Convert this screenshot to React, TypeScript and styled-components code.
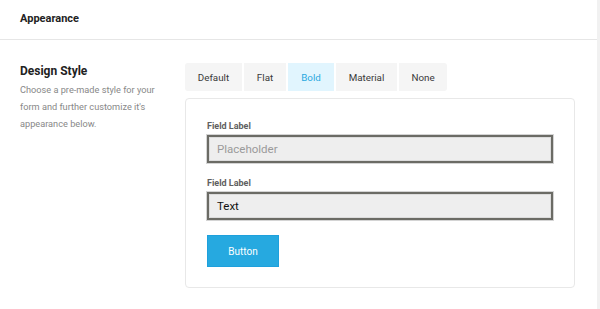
import { createGlobalStyle } from "styled-components";
import styled from "styled-components";

const GlobalStyle = createGlobalStyle`
  html, body {
    margin: 0;
    padding: 0;
    background: #ffffff;
    font-family: Roboto, "Noto Sans", "Liberation Sans", sans-serif;
  }
`;

const Page = styled.div`
  width: 597px;
  height: 309px;
  border-right: 3px solid #f1f1f1;
  background: #fff;
  overflow: hidden;
`;

const Header = styled.div`
  height: 40px;
  border-bottom: 1px solid #e6e6e6;
  box-sizing: border-box;
  display: flex;
  align-items: center;
  padding: 0 20px 2px;
  font-size: 11px;
  font-weight: 700;
  color: #222;
`;

const Section = styled.div`
  display: flex;
  padding: 23px 0 0 20px;
`;

const Intro = styled.div`
  width: 165px;
  flex-shrink: 0;
  padding-top: 1px;
`;

const Title = styled.div`
  font-size: 12px;
  font-weight: 700;
  color: #222;
  margin-bottom: 3px;
`;

const Description = styled.div`
  font-size: 9.2px;
  line-height: 17px;
  color: #888;
  width: 140px;
`;

const Preview = styled.div`
  width: 390px;
`;

const Tabs = styled.div`
  display: flex;
  gap: 2px;
  height: 28px;
  margin-bottom: 7px;
`;

const Tab = styled.div<{ $width: number; $active?: boolean }>`
  width: ${(p) => p.$width}px;
  display: flex;
  align-items: center;
  justify-content: center;
  font-size: 9.8px;
  font-weight: 400;
  color: ${(p) => (p.$active ? "#2aa8e0" : "#3a3a3a")};
  background: ${(p) => (p.$active ? "#e1f5fe" : "#f5f5f5")};
  &:first-child {
    border-radius: 3px 0 0 3px;
  }
  &:last-child {
    border-radius: 0 3px 3px 0;
  }
`;

const Panel = styled.div`
  border: 1px solid #e8e8e8;
  border-radius: 4px;
  height: 190px;
  box-sizing: border-box;
  padding: 22px 21px 0;
`;

const Field = styled.div`
  margin-bottom: 15px;
`;

const Label = styled.div`
  font-size: 9px;
  font-weight: 700;
  color: #606060;
  margin-bottom: 4px;
`;

const Input = styled.div<{ $placeholder?: boolean }>`
  height: 28px;
  box-sizing: border-box;
  border: 2px solid #6b6b65;
  box-shadow: 0 0 0 1px #d4d4d4, inset 0 0 0 1px #dcdcdc;
  background: #eeeeee;
  display: flex;
  align-items: center;
  padding: 0 8px;
  font-size: 11.5px;
  color: ${(p) => (p.$placeholder ? "#9a9a9a" : "#111")};
  width: 346px;
`;

const Button = styled.div`
  width: 72px;
  height: 32px;
  box-sizing: border-box;
  margin-top: 15px;
  background: #26a9e0;
  border: 1px solid #1ea0dc;
  color: #fff;
  font-size: 10px;
  display: flex;
  align-items: center;
  justify-content: center;
`;

const tabs = [
  { name: "Default", width: 57 },
  { name: "Flat", width: 42 },
  { name: "Bold", width: 46 },
  { name: "Material", width: 61 },
  { name: "None", width: 48 },
];

export default function App() {
  return (
    <Page>
      <GlobalStyle />
      <Header>Appearance</Header>
      <Section>
        <Intro>
          <Title>Design Style</Title>
          <Description>
            Choose a pre-made style for your form and further customize it's
            appearance below.
          </Description>
        </Intro>
        <Preview>
          <Tabs>
            {tabs.map((t) => (
              <Tab key={t.name} $width={t.width} $active={t.name === "Bold"}>
                {t.name}
              </Tab>
            ))}
          </Tabs>
          <Panel>
            <Field>
              <Label>Field Label</Label>
              <Input $placeholder>Placeholder</Input>
            </Field>
            <Field>
              <Label>Field Label</Label>
              <Input>Text</Input>
            </Field>
            <Button>Button</Button>
          </Panel>
        </Preview>
      </Section>
    </Page>
  );
}
